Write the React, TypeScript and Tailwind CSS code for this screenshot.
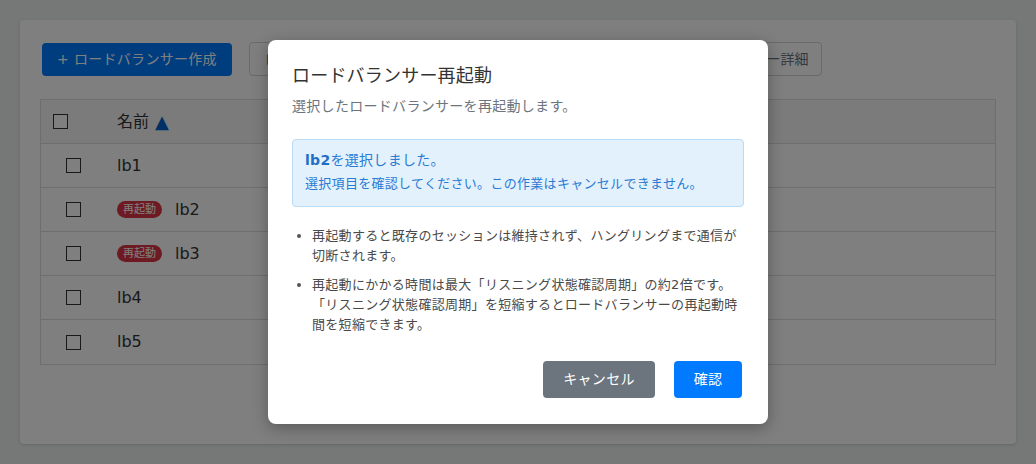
import React from "react";

const rows = [
  { name: "lb1", badge: false },
  { name: "lb2", badge: true },
  { name: "lb3", badge: true },
  { name: "lb4", badge: false },
  { name: "lb5", badge: false },
];

function Box() {
  return <span className="inline-block w-[15px] h-[15px] border border-[#333] bg-white" />;
}

export default function App() {
  return (
    <div className="relative w-[1036px] h-[464px] overflow-hidden bg-[#ecefef] p-[20px] font-['DejaVu_Sans','Noto_Sans_CJK_JP',sans-serif]">
      <div className="h-[424px] bg-white rounded-[4px] shadow-[0_1px_3px_rgba(0,0,0,0.15)] px-[20px] pt-[22px]">
        <div className="flex items-start gap-[17px] pl-[2px]">
          <button className="mt-[1px] h-[33px] w-[190px] rounded-[4px] bg-[#007bff] text-white text-[14px] tracking-[0.3px] flex items-center justify-center">
            + ロードバランサー作成
          </button>
          <button className="h-[34px] w-[186px] rounded-[4px] border border-[#ced4da] text-[#6c757d] text-[14px]">
            ロードバランサー再起動
          </button>
          <button className="h-[34px] w-[186px] rounded-[4px] border border-[#ced4da] text-[#6c757d] text-[14px]">
            ロードバランサー削除
          </button>
          <button className="h-[34px] w-[167px] rounded-[4px] border border-[#ced4da] text-[#6c757d] text-[14px]">
            ロードバランサー詳細
          </button>
        </div>
        <div className="mt-[23px] w-[956px] border border-[#dcdcdc]">
          <div className="h-[44px] flex items-center bg-[#f6f6f6] border-b border-[#dcdcdc]">
            <div className="w-[76px] pl-[12px] flex items-center"><Box /></div>
            <div className="text-[16px] text-[#333] flex items-center gap-[6px]">
              名前 <span className="text-[#0062cc] text-[18px] leading-none">▲</span>
            </div>
          </div>
          {rows.map((r, i) => (
            <div key={r.name} className={`h-[44px] flex items-center ${i < rows.length - 1 ? "border-b border-[#dcdcdc]" : ""}`}>
              <div className="w-[76px] pl-[25px] flex items-center"><Box /></div>
              <div className="flex items-center gap-[13px] text-[16px] text-[#333]">
                {r.badge && (
                  <span className="h-[17px] w-[45px] rounded-full bg-[#dc3545] text-white text-[11px] leading-[17px] text-center">再起動</span>
                )}
                <span>{r.name}</span>
              </div>
            </div>
          ))}
        </div>
      </div>

      <div className="absolute inset-0 bg-black/50 flex items-center justify-center">
        <div className="w-[500px] h-[384px] bg-white rounded-[8px] shadow-[0_4px_16px_rgba(0,0,0,0.3)] pt-[24px] px-[24px] pb-[26px] flex flex-col tracking-[0.3px]">
          <h2 className="text-[18px] leading-[24px] text-[#333] tracking-[0.2px]">ロードバランサー再起動</h2>
          <p className="mt-[8px] text-[14px] leading-[20px] text-[#6c757d]">選択したロードバランサーを再起動します。</p>
          <div className="mt-[23px] h-[68px] rounded-[4px] border border-[#b8dcf8] bg-[#e3f1fd] px-[12px] pt-[8px] text-[#2a7bd4]">
            <div className="text-[14px] leading-[24px]"><span className="font-bold text-[#1f6fc8]">lb2</span>を選択しました。</div>
            <div className="text-[13px] leading-[24px]">選択項目を確認してください。この作業はキャンセルできません。</div>
          </div>
          <ul className="mt-[19px] pl-[20px] list-disc text-[13px] leading-[20px] text-[#4a4a4a] whitespace-nowrap marker:text-[#555]">
            <li className="mb-[9px]">再起動すると既存のセッションは維持されず、ハングリングまで通信が<br />切断されます。</li>
            <li>再起動にかかる時間は最大「リスニング状態確認周期」の約2倍です。<br />「リスニング状態確認周期」を短縮するとロードバランサーの再起動時<br />間を短縮できます。</li>
          </ul>
          <div className="mt-auto flex justify-end gap-[19px] pr-[2px]">
            <button className="h-[37px] w-[112px] rounded-[4px] bg-[#6c757d] text-white text-[14px] tracking-[0.3px]">キャンセル</button>
            <button className="h-[37px] w-[68px] rounded-[4px] bg-[#007bff] text-white text-[14px]">確認</button>
          </div>
        </div>
      </div>
    </div>
  );
}
